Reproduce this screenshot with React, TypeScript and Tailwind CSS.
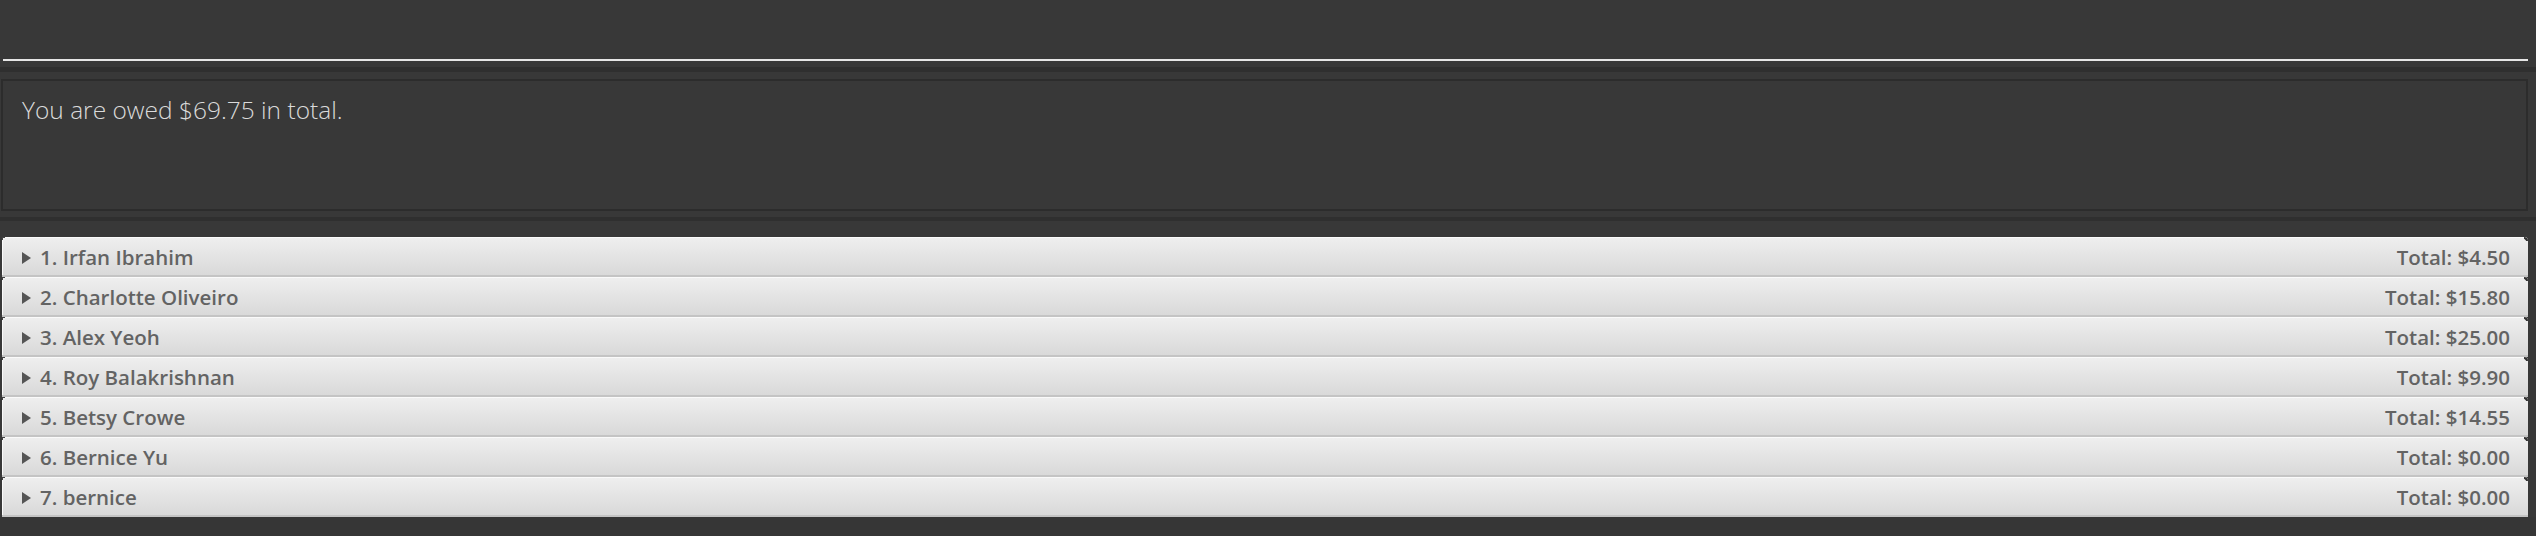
import React from "react";

const people = [
  { name: "1. Irfan Ibrahim", total: "$4.50" },
  { name: "2. Charlotte Oliveiro", total: "$15.80" },
  { name: "3. Alex Yeoh", total: "$25.00" },
  { name: "4. Roy Balakrishnan", total: "$9.90" },
  { name: "5. Betsy Crowe", total: "$14.55" },
  { name: "6. Bernice Yu", total: "$0.00" },
  { name: "7. bernice", total: "$0.00" },
];

function Row({ name, total }: { name: string; total: string }) {
  return (
    <div className="relative h-[40px] flex items-center justify-between pl-[20px] pr-[18px] pt-[2px] bg-gradient-to-b from-[#efefef] to-[#d9d9d9] border-b-[2px] border-[#c4c4c4] rounded-tr-[4px] rounded-tl-[2px] shadow-[inset_1px_1px_0_#fafafa]">
      <span className="absolute left-0 top-0 w-[3px] h-[3px] border-l border-t border-[#444]" />
      <span className="absolute right-0 top-0 w-[4px] h-[4px] border-r-2 border-t-2 border-[#333] rounded-tr-[4px]" />
      <div className="flex items-center gap-[9px]">
        <svg width="9" height="12" viewBox="0 0 9 12" className="mt-[1px]">
          <path d="M0 0 L9 6 L0 12 Z" fill="#555" />
        </svg>
        <span className="text-[20.5px] font-semibold text-[#636363]" style={{ fontFamily: "'Open Sans', sans-serif" }}>{name}</span>
      </div>
      <span className="text-[20.5px] font-semibold text-[#636363]" style={{ fontFamily: "'Open Sans', sans-serif" }}>Total: {total}</span>
    </div>
  );
}

export default function App() {
  return (
    <div className="w-[2536px] h-[536px] bg-[#383838] flex flex-col overflow-hidden">
      <div className="h-[59px]" />
      <div className="h-[2px] ml-[3px] mr-[8px] bg-[#e6e6e6]" />
      <div className="h-[6px]" />
      <div className="h-[5px] bg-[#2f2f2f]" />
      <div className="h-[7px]" />
      <div className="h-[132px] ml-[1px] mr-[8px] border-[2px] border-[#2c2c2c] pl-[19px] pt-[11px]">
        <span className="text-[24.5px] font-light text-[#dadada]" style={{ fontFamily: "'Open Sans', sans-serif" }}>
          You are owed $69.75 in total.
        </span>
      </div>
      <div className="h-[6px]" />
      <div className="h-[4px] bg-[#2f2f2f]" />
      <div className="h-[16px]" />
      <div className="ml-[2px] mr-[8px] flex flex-col">
        {people.map((p) => (
          <Row key={p.name} name={p.name} total={p.total} />
        ))}
      </div>
      <div className="flex-1 bg-[#363636]" />
    </div>
  );
}
